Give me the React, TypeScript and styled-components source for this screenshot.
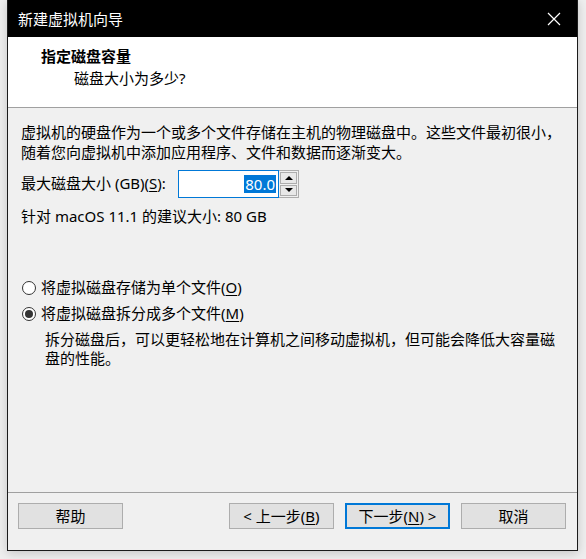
import React, { useState } from 'react';
import styled, { createGlobalStyle } from 'styled-components';

const GlobalStyle = createGlobalStyle`
  html, body {
    margin: 0;
    padding: 0;
    background: #efefef;
  }
  body {
    font-family: "Noto Sans", "Noto Sans CJK SC", sans-serif;
    color: #000;
  }
`;

const Page = styled.div`
  width: 586px;
  height: 559px;
  padding-left: 7px;
  box-sizing: border-box;
  overflow: hidden;
`;

const Window = styled.div`
  width: 571px;
  height: 551px;
  box-sizing: border-box;
  border: 1px solid #1b1b1b;
  border-top: none;
  display: flex;
  flex-direction: column;
  background: #f0f0f0;
  box-shadow: 0 2px 10px rgba(0, 0, 0, 0.18);
`;

const TitleBar = styled.div`
  height: 37px;
  background: #000;
  color: #fff;
  display: flex;
  align-items: center;
  justify-content: space-between;
  padding-left: 10px;
  font-size: 15px;
  flex-shrink: 0;
`;

const CloseButton = styled.div`
  width: 46px;
  height: 37px;
  display: flex;
  align-items: center;
  justify-content: center;
`;

const Header = styled.div`
  height: 71px;
  background: #fff;
  border-bottom: 1px solid #a0a0a0;
  box-sizing: border-box;
  padding-top: 9px;
  flex-shrink: 0;
`;

const HeaderTitle = styled.div`
  font-weight: bold;
  font-size: 15px;
  line-height: 20px;
  padding-left: 33px;
`;

const HeaderSub = styled.div`
  font-size: 15px;
  line-height: 20px;
  padding-left: 66px;
  margin-top: 2px;
`;

const Body = styled.div`
  flex: 1;
  padding: 15px 12px 0 13px;
  font-size: 15px;
  line-height: 19.5px;
`;

const Paragraph = styled.p<{ $indent?: number }>`
  margin: 0;
  padding-left: ${({ $indent }) => $indent ?? 0}px;
`;

const SizeRow = styled.div`
  display: flex;
  align-items: center;
  margin-top: 8px;
  height: 28px;
`;

const SizeLabel = styled.span`
  width: 157px;
  flex-shrink: 0;
`;

const SpinBox = styled.div`
  display: flex;
  height: 28px;
`;

const SpinInput = styled.div`
  width: 101px;
  box-sizing: border-box;
  border: 1px solid #0078d7;
  background: #fff;
  display: flex;
  align-items: center;
  justify-content: flex-end;
  padding-right: 2px;
`;

const Selected = styled.span`
  background: #0078d7;
  color: #fff;
  line-height: 18px;
  padding: 0 1px;
`;

const SpinButtons = styled.div`
  width: 20px;
  display: flex;
  flex-direction: column;
  border: 1px solid #adadad;
  border-left: none;
  box-sizing: border-box;
  background: #f0f0f0;
  padding: 1px;
  gap: 1px;
`;

const SpinArrow = styled.div<{ $down?: boolean }>`
  flex: 1;
  background: #e8e8e8;
  border: 1px solid #adadad;
  display: flex;
  align-items: center;
  justify-content: center;
  &::after {
    content: '';
    width: 0;
    height: 0;
    border-left: 4px solid transparent;
    border-right: 4px solid transparent;
    ${({ $down }) => ($down ? 'border-top: 4px solid #000;' : 'border-bottom: 4px solid #000;')}
  }
`;

const Hint = styled.div`
  margin-top: 9px;
`;

const RadioGroup = styled.div`
  margin-top: 51px;
  display: flex;
  flex-direction: column;
  gap: 6px;
`;

const RadioRow = styled.label`
  display: flex;
  align-items: center;
  height: 20px;
  padding-left: 1px;
  cursor: default;
`;

const RadioCircle = styled.span<{ $checked: boolean }>`
  width: 14px;
  height: 14px;
  box-sizing: border-box;
  border-radius: 50%;
  border: 1px solid #333;
  background: #fff;
  margin-right: 5px;
  display: flex;
  align-items: center;
  justify-content: center;
  &::after {
    content: '';
    width: 8px;
    height: 8px;
    border-radius: 50%;
    background: ${({ $checked }) => ($checked ? '#333' : 'transparent')};
  }
`;

const Key = styled.span`
  text-decoration: underline;
  text-underline-offset: 2px;
`;

const Description = styled(Paragraph)`
  margin-top: 6px;
`;

const Footer = styled.div`
  height: 47px;
  border-top: 1px solid #a0a0a0;
  display: flex;
  align-items: flex-start;
  padding: 10px 11px 0 10px;
  flex-shrink: 0;
`;

const Button = styled.div<{ $primary?: boolean }>`
  width: 105px;
  height: 26px;
  box-sizing: border-box;
  background: #e1e1e1;
  border: ${({ $primary }) => ($primary ? '2px solid #0078d7' : '1px solid #adadad')};
  display: flex;
  align-items: center;
  justify-content: center;
  font-size: 15px;
  line-height: 18px;
`;

const Spacer = styled.div`
  flex: 1;
`;

const ButtonGroup = styled.div`
  display: flex;
  gap: 11px;
`;

const App: React.FC = () => {
  const [split, setSplit] = useState(true);

  return (
    <Page>
      <GlobalStyle />
      <Window>
        <TitleBar>
          新建虚拟机向导
          <CloseButton>
            <svg width="14" height="14" viewBox="0 0 14 14">
              <path d="M1 1 L13 13 M13 1 L1 13" stroke="#fff" strokeWidth="1.2" />
            </svg>
          </CloseButton>
        </TitleBar>
        <Header>
          <HeaderTitle>指定磁盘容量</HeaderTitle>
          <HeaderSub>磁盘大小为多少?</HeaderSub>
        </Header>
        <Body>
          <Paragraph>
            虚拟机的硬盘作为一个或多个文件存储在主机的物理磁盘中。这些文件最初很小，
            <br />
            随着您向虚拟机中添加应用程序、文件和数据而逐渐变大。
          </Paragraph>
          <SizeRow>
            <SizeLabel>
              最大磁盘大小 (GB)(<Key>S</Key>):
            </SizeLabel>
            <SpinBox>
              <SpinInput>
                <Selected>80.0</Selected>
              </SpinInput>
              <SpinButtons>
                <SpinArrow />
                <SpinArrow $down />
              </SpinButtons>
            </SpinBox>
          </SizeRow>
          <Hint>针对 macOS 11.1 的建议大小: 80 GB</Hint>
          <RadioGroup>
            <RadioRow onClick={() => setSplit(false)}>
              <RadioCircle $checked={!split} />
              将虚拟磁盘存储为单个文件(<Key>O</Key>)
            </RadioRow>
            <RadioRow onClick={() => setSplit(true)}>
              <RadioCircle $checked={split} />
              将虚拟磁盘拆分成多个文件(<Key>M</Key>)
            </RadioRow>
          </RadioGroup>
          <Description $indent={24}>
            拆分磁盘后，可以更轻松地在计算机之间移动虚拟机，但可能会降低大容量磁
            <br />
            盘的性能。
          </Description>
        </Body>
        <Footer>
          <Button>帮助</Button>
          <Spacer />
          <ButtonGroup>
            <Button>
              &lt; 上一步(<Key>B</Key>)
            </Button>
            <Button $primary>
              下一步(<Key>N</Key>) &gt;
            </Button>
            <Button>取消</Button>
          </ButtonGroup>
        </Footer>
      </Window>
    </Page>
  );
};

export default App;
